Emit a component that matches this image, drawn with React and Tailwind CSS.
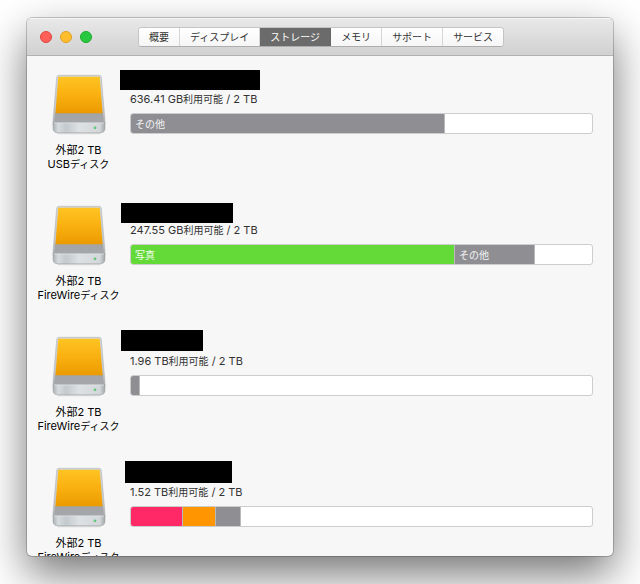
import { useState } from 'react';

const tabs = ['概要', 'ディスプレイ', 'ストレージ', 'メモリ', 'サポート', 'サービス'];

const volumes = [
  {
    id: 1,
    bus: 'USB',
    free: '636.41 GB',
    mask: 'w-[140px] h-5 self-center',
    segments: [{ label: 'その他', percent: 68.1, color: 'bg-[#8e8e93]' }],
  },
  {
    id: 2,
    bus: 'FireWire',
    free: '247.55 GB',
    mask: 'w-[112px] h-5 ml-px self-end',
    segments: [
      { label: '写真', percent: 70.3, color: 'bg-[#63da38]' },
      { label: 'その他', percent: 17.3, color: 'bg-[#8e8e93]' },
    ],
  },
  {
    id: 3,
    bus: 'FireWire',
    free: '1.96 TB',
    mask: 'w-[82px] h-[21px] ml-px self-start',
    segments: [{ label: '', percent: 1.9, color: 'bg-[#8e8e93]' }],
  },
  {
    id: 4,
    bus: 'FireWire',
    free: '1.52 TB',
    mask: 'w-[107px] h-[22px] ml-[5px] self-start',
    segments: [
      { label: '', percent: 11.3, color: 'bg-[#ff2968]' },
      { label: '', percent: 7.2, color: 'bg-[#ff9500]' },
      { label: '', percent: 5.4, color: 'bg-[#8e8e93]' },
    ],
  },
];

const DriveIcon = () => (
  <svg className="w-[59px] h-[62px]" viewBox="0 0 59 62" aria-hidden="true">
    <defs>
      <linearGradient id="drive-top" x1="0" y1="0" x2="0" y2="1">
        <stop offset="0" stopColor="#d3d6d9" />
        <stop offset="0.7" stopColor="#c3c6c9" />
        <stop offset="1" stopColor="#b0b3b6" />
      </linearGradient>
      <linearGradient id="drive-label" x1="0" y1="0" x2="0" y2="1">
        <stop offset="0" stopColor="#ffc423" />
        <stop offset="0.5" stopColor="#f9b010" />
        <stop offset="1" stopColor="#eb9a00" />
      </linearGradient>
      <linearGradient id="drive-deck" x1="0" y1="0" x2="0" y2="1">
        <stop offset="0" stopColor="#a3a4a6" />
        <stop offset="1" stopColor="#a5a6a9" />
      </linearGradient>
      <linearGradient id="drive-front" x1="0" y1="0" x2="1" y2="0">
        <stop offset="0" stopColor="#a9aeb2" />
        <stop offset="0.1" stopColor="#d6dbde" />
        <stop offset="0.25" stopColor="#c3c9cd" />
        <stop offset="0.5" stopColor="#dde1e4" />
        <stop offset="0.9" stopColor="#d3d7da" />
        <stop offset="1" stopColor="#a2a7aa" />
      </linearGradient>
    </defs>
    <path d="M6 58h48l-3 3.200H9z" fill="#000" opacity=".12" />
    <path
      d="M10 2.300h40q2 0 2.300 2L56 47v4.500H4V47L7.700 4.300Q8 2.300 10 2.300z"
      fill="url(#drive-top)"
      stroke="#a9acaf"
      strokeWidth=".5"
    />
    <path d="M6.200 39.500h47.600l1.200 9.500H5z" fill="url(#drive-deck)" />
    <path d="M9.300 3.800h41.400L53.600 40.300H6.400z" fill="url(#drive-label)" />
    <path
      d="M4 49.500h52V55q0 4.700-4.500 4.700h-43Q4 59.700 4 55z"
      fill="url(#drive-front)"
      stroke="#999c9f"
      strokeWidth=".5"
    />
    <path d="M5 50h50" stroke="#e2e5e7" strokeWidth=".8" />
    <circle cx="46" cy="54.800" r="1.400" fill="#5fc878" />
  </svg>
);

const UsageBar = ({ segments }) => (
  <div className="flex h-[21px] overflow-hidden rounded-[3px] border border-[#cdcdcd] bg-white">
    {segments.map((segment, index) => (
      <div
        key={index}
        className={`flex items-center overflow-hidden border-r border-[#b9b9bb] text-[10px] leading-none text-white/90 ${segment.color}`}
        style={{ width: `${segment.percent}%` }}
      >
        {segment.label && <span className="pl-1">{segment.label}</span>}
      </div>
    ))}
  </div>
);

const VolumeRow = ({ volume }) => (
  <li className="flex h-[131px] shrink-0">
    <div className="flex w-[83px] shrink-0 flex-col items-center pt-[5px]">
      <DriveIcon />
      <p className="mt-2 whitespace-nowrap text-center text-[11px] leading-[14px] text-black">
        外部2 TB
        <br />
        {volume.bus}
        <span className="text-[10px]">ディスク</span>
      </p>
    </div>
    <div className="min-w-0 flex-1">
      <div className="flex h-6">
        <div className={`bg-black ${volume.mask}`} />
      </div>
      <div className="pl-[10px]">
        <p className="mb-[7px] h-[14px] text-[11px] leading-[14px] text-[#333]">
          {volume.free}
          <span className="text-[10px]">利用可能</span> / 2 TB
        </p>
        <UsageBar segments={volume.segments} />
      </div>
    </div>
  </li>
);

const App = () => {
  const [activeTab, setActiveTab] = useState('ストレージ');

  return (
    <div className="h-screen overflow-hidden bg-white px-[27px] pt-[18px] pb-7 font-['Inter','Noto_Sans_CJK_JP',sans-serif]">
      <main className="flex h-full flex-col overflow-hidden rounded-[5px] bg-[#f7f7f7] shadow-[0_0_0_1px_rgba(0,0,0,0.2),0_18px_44px_rgba(0,0,0,0.55)]">
        <header className="flex h-[38px] shrink-0 items-center border-b border-[#b1b1b1] bg-linear-to-b from-[#e9e9e9] to-[#d1d1d1] pl-[13px] shadow-[inset_0_1px_0_#f5f5f5]">
          <div className="flex gap-2">
            <button aria-label="閉じる" className="size-3 rounded-full border border-[#e0443e] bg-[#ff5f57]" />
            <button aria-label="しまう" className="size-3 rounded-full border border-[#dea123] bg-[#ffbd2e]" />
            <button aria-label="拡大" className="size-3 rounded-full border border-[#1aab29] bg-[#28c940]" />
          </div>
          <nav className="ml-[46px] flex h-5 overflow-hidden rounded-[4px] border border-[#c4c4c4] border-b-[#adadad] bg-white">
            {tabs.map((tab) => (
              <button
                key={tab}
                onClick={() => setActiveTab(tab)}
                className={`whitespace-nowrap border-r px-[10px] text-[10px] leading-none last:border-r-0 ${
                  tab === activeTab
                    ? 'border-[#666] bg-[#6b6b6b] text-white'
                    : 'border-[#d6d6d6] bg-linear-to-b from-white to-[#f6f6f6] text-[#333]'
                }`}
              >
                {tab}
              </button>
            ))}
          </nav>
        </header>
        <ul className="flex min-h-0 flex-1 flex-col overflow-x-hidden overflow-y-auto pt-3 pr-5 pl-[10px] [scrollbar-width:none]">
          {volumes.map((volume) => (
            <VolumeRow key={volume.id} volume={volume} />
          ))}
        </ul>
      </main>
    </div>
  );
};

export default App;
